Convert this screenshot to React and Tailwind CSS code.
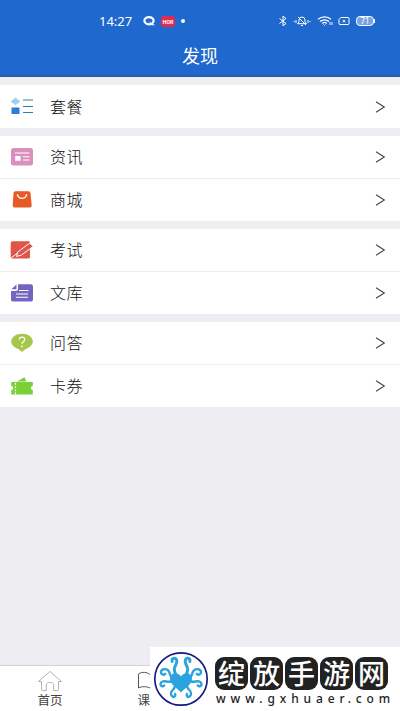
import React from 'react';

const PackageIcon = () => (
  <svg viewBox="0 0 24 20" className="w-6 h-5">
    <path d="M5.5 1.200 9.700 4.400 5.500 7.600 1.300 4.400Z" fill="#9bd0ee" stroke="#9bd0ee" strokeLinejoin="round" />
    <rect x="1.500" y="10.500" width="8" height="6.500" rx=".5" fill="#2f7bd6" />
    <path d="M13 3h10M13 9.500h10M13 15.500h10" stroke="#3a76b5" strokeWidth="1.200" />
  </svg>
);

const NewsIcon = () => (
  <svg viewBox="0 0 24 20" className="w-6 h-5">
    <rect x="1" y="1" width="22" height="17.500" rx="2.500" fill="#db8fbd" />
    <path d="M5 6h14.500M13 9.700h6.500M13 13h6.500" stroke="#fff" strokeWidth="1.100" />
    <rect x="5.200" y="9" width="5.400" height="4.800" fill="#fff" />
  </svg>
);

const ShopIcon = () => (
  <svg viewBox="0 0 24 20" className="w-6 h-5">
    <path d="M5.500 1.200h13a2 2 0 0 1 2 1.700l1.200 12.400a2 2 0 0 1-2 2.200H4.700a2 2 0 0 1-2-2.200L3.500 2.900a2 2 0 0 1 2-1.700Z" fill="#e55a25" />
    <path d="M7.500 5c1.500 4.500 7.500 4.500 9 0" fill="none" stroke="#fff" strokeWidth="1.100" strokeLinecap="round" />
    <circle cx="7.500" cy="5" r=".8" fill="#fff" />
    <circle cx="16.500" cy="5" r=".8" fill="#fff" />
  </svg>
);

const ExamIcon = () => (
  <svg viewBox="0 0 24 20" className="w-6 h-5">
    <path d="M2.500 1.200h16.500a1 1 0 0 1 1 1V17a1.500 1.500 0 0 1-1.500 1.500H1.500L.7 17V3a1.800 1.800 0 0 1 1.800-1.800Z" fill="#e0554a" />
    <path d="M1 18.200 7.500 13" stroke="#fff" strokeWidth="1" />
    <path d="m6.500 16.500 1.300-4.500L19.500 3.200 23.400 6.300 11.500 15Z" fill="#e0554a" stroke="#fff" strokeWidth="1" />
  </svg>
);

const LibraryIcon = () => (
  <svg viewBox="0 0 24 20" className="w-6 h-5">
    <path d="M8 1.200h12.800A2.200 2.200 0 0 1 23 3.400v13a2.200 2.200 0 0 1-2.200 2.200H3.200A2.200 2.200 0 0 1 1 16.400V8h5a2 2 0 0 0 2-2Z" fill="#7466c0" />
    <path d="M1.300 6.300 6.500 1.500v4a.8.8 0 0 1-.8.800Z" fill="#7466c0" />
    <path d="M9 7.500h9.500M6 11h12M6 14.300h12" stroke="#fff" strokeWidth="1.100" />
  </svg>
);

const QuestionIcon = () => (
  <svg viewBox="0 0 24 20" className="w-6 h-5">
    <path d="M12 .8c6 0 10.800 3.400 10.800 7.700 0 3.400-3.300 6.400-7.200 7.400L12 19l-3.600-3.100C4.500 14.900 1.200 11.900 1.200 8.500 1.200 4.200 6 .8 12 .8Z" fill="#a5c74c" />
    <path d="M9.300 6.500c.2-3.400 5.800-3 5.500.1-.2 2-2.800 2-2.800 4.400" fill="none" stroke="#fff" strokeWidth="1.200" />
    <circle cx="12" cy="13.300" r=".9" fill="#fff" />
  </svg>
);

const CouponIcon = () => (
  <svg viewBox="0 0 24 20" className="w-6 h-5">
    <path d="m7 5.500 7.500-4.300L16.300 5.500Z" fill="#7ccb3f" />
    <path d="M1.200 6h21.600v4a2 2 0 0 0 0 4v4.500H1.200V14a2 2 0 0 0 0-4Z" fill="#7ad037" />
    <path d="M5.500 7v11" stroke="#fff" strokeWidth="1.200" strokeDasharray="1.800 1.400" />
  </svg>
);

const groups = [
  [{ label: '套餐', icon: PackageIcon }],
  [
    { label: '资讯', icon: NewsIcon },
    { label: '商城', icon: ShopIcon },
  ],
  [
    { label: '考试', icon: ExamIcon },
    { label: '文库', icon: LibraryIcon },
  ],
  [
    { label: '问答', icon: QuestionIcon },
    { label: '卡券', icon: CouponIcon },
  ],
];

const StatusBar = () => (
  <div className="flex h-[42px] items-center pl-[99px] pr-[25px] text-white">
    <span className="w-[35px] whitespace-nowrap text-[13px] leading-none font-['Noto_Sans']">14:27</span>
    <svg viewBox="0 0 14 12" className="ml-[8px] h-3 w-3.5">
      <ellipse cx="7" cy="5.700" rx="4.600" ry="3.600" fill="none" stroke="#fff" strokeWidth="2.200" />
      <path d="m7.500 6.500 5.500 3.700H9Z" fill="#fff" />
    </svg>
    <span className="ml-[5px] flex h-[11px] w-[14px] items-center justify-center rounded-[3px] bg-[#df2c50] text-[5px] font-bold leading-none">
      HOR
    </span>
    <span className="ml-[6px] h-1 w-1 rounded-full bg-white" />

    <div className="ml-auto flex items-center">
      <svg viewBox="0 0 10 12" className="h-3 w-2.5" fill="none" stroke="#fff" strokeWidth="1">
        <path d="m1.500 3.500 6.500 5L5 10.800V1.200l3 2.300-6.500 5" />
      </svg>
      <svg viewBox="0 0 18 12" className="ml-[5px] h-3 w-[18px]" fill="none" stroke="#fff" strokeWidth="1">
        <path d="M4.500 8.700h9L12 7V5a3 3 0 0 0-6 0v2ZM8 10.500h2M5 2l8 8M3 5v3M1 6v1M15 5v3M17 6v1" />
      </svg>
      <svg viewBox="0 0 16 12" className="ml-[6px] h-3 w-4" fill="none" stroke="#fff" strokeWidth="1.200">
        <path d="M1 4.300c3.500-3.200 9.500-3.200 13 0M3 6.500c2.500-2.300 6.500-2.300 9 0M5.200 8.500c1.300-1.200 3.300-1.200 4.600 0" />
        <path d="m6.500 9.500 1 1 1-1M13 7v3M15 7v3" strokeWidth=".9" />
      </svg>
      <svg viewBox="0 0 12 10" className="ml-[5px] h-2.5 w-3" fill="none" stroke="#fff" strokeWidth="1">
        <path d="M2.800 1.500H10a1 1 0 0 1 1 1v5a1 1 0 0 1-1 1H2a1 1 0 0 1-1-1v-4ZM4.800 4l2.400 2.400M7.200 4 4.800 6.400" />
      </svg>
      <span className="ml-[6px] flex h-[10px] w-[18px] items-center justify-center rounded-[4px] border border-white bg-[#75a4e4] text-[8px] leading-none font-['Noto_Sans']">
        71
      </span>
      <span className="h-[4px] w-px bg-white" />
    </div>
  </div>
);

const MenuRow = ({ item, last, single }) => {
  const Icon = item.icon;
  return (
    <div
      className={`flex items-center bg-white pl-[10px] pr-[14px] ${
        single ? 'h-[43px]' : last ? 'h-[42px]' : 'h-[43px] border-b border-[#ededf0]'
      }`}
    >
      <Icon />
      <span className="ml-[16px] pb-[2px] text-[16px] font-light leading-none tracking-[0.400px] text-[#111]">{item.label}</span>
      <svg viewBox="0 0 12 14" className="ml-auto h-3.5 w-3" fill="none" stroke="#444" strokeWidth="1.100">
        <path d="m2 1.800 8.300 5.200L2 12.200" />
      </svg>
    </div>
  );
};

const Octopus = () => (
  <svg viewBox="0 0 56 56" className="h-14 w-14 shrink-0">
    <circle cx="28" cy="28" r="26.200" fill="#fff" stroke="#171b82" strokeWidth="1.700" />
    <path d="M28 41.500c-3-4-11.500-8-11-14 .3-5.500 7-7.500 11-2 4-5.500 10.700-3.500 11 2 .5 6-8 10-11 14Z" fill="#2ba3df" />
    {[1, -1].map((side) => (
      <g
        key={side}
        transform={side === 1 ? undefined : 'translate(56 0) scale(-1 1)'}
        fill="none"
        stroke="#2ba3df"
        strokeWidth="2.400"
        strokeLinecap="round"
      >
        <path d="M19.200 10.500c-1-3.500 3-4.300 4.300-2 1.500 3.500-2 6.500-2.200 9.500-.1 2.500 1.200 4.500 2.200 7" strokeWidth="2.900" />
        <path d="M12.200 22.800c-2 2-4.500 0-4.200-2 .5-3 4.500-3.200 6.700-1.700 2.800 2 1.500 5.500 4.500 8.200" />
        <path d="M11.200 34.500c-1.500 1.800-4 .3-3.700-1.700.5-2.800 4.200-2.800 6-2.300 2.700.7 4.700.2 6.200-1" />
        <path d="M22.200 43c.8 2.500-1.700 3.700-3.200 2.200-2.200-2.200-.5-5 .7-6.200 1-1 2-2 2.300-4" />
      </g>
    ))}
  </svg>
);

const SiteBadge = () => (
  <div className="absolute bottom-0 right-0 flex h-16 w-[250px] bg-white pl-[3px] pt-[4px]">
    <Octopus />
    <div className="ml-[6px] mt-[6px] w-[178px]">
      <div className="flex gap-[2px]">
        {['绽', '放', '手', '游', '网'].map((char) => (
          <span
            key={char}
            className="flex h-[33px] w-[33px] items-center justify-center rounded-[9px] bg-[#222] pb-[3px] text-[27px] font-medium leading-none text-white"
          >
            {char}
          </span>
        ))}
      </div>
      <div className="mt-[2px] whitespace-nowrap pl-px text-[12px] font-medium leading-[14px] tracking-[4.900px] text-[#222] font-['Noto_Sans']">
        www.gxhuaer.com
      </div>
    </div>
  </div>
);

const TabBar = () => (
  <div className="flex h-[46px] border-t border-[#d2d2d4] bg-white text-[12.500px] text-[#444]">
    <div className="flex w-[100px] flex-col items-center pt-[4px]">
      <svg viewBox="0 0 26 22" className="h-[22px] w-[26px]" fill="none" stroke="#aaa" strokeWidth=".9">
        <path d="M13 1.500 1.500 11.500h3v8.200c0 .5.300.8.800.8h4v-5.500c0-3.500 7.400-3.500 7.400 0v5.500h4c.5 0 .8-.3.800-.8v-8.200h3Z" strokeLinejoin="round" />
      </svg>
      <span className="mt-px leading-[14px]">首页</span>
    </div>
    <div className="flex w-[100px] flex-col items-center pt-[4px]">
      <svg viewBox="0 0 26 22" className="h-[22px] w-[26px]" fill="none" stroke="#555" strokeWidth="1">
        <path d="M13 4.500C10 2 5 1.500 1.500 4v14c3.500-2 8.500-1.500 11.500 0 3-1.500 8-2 11.500 0V4C21 1.500 16 2 13 4.500Z" />
      </svg>
      <span className="mt-px leading-[14px]">课程</span>
    </div>
  </div>
);

const App = () => {
  return (
    <div className="relative flex h-[711px] w-[400px] flex-col overflow-hidden bg-[#eeeef2] font-['Noto_Sans_CJK_SC',sans-serif]">
      <header className="h-[77px] shrink-0 border-b-2 border-[#285fa8] bg-[#1f69ce]">
        <StatusBar />
        <h1 className="text-center text-[18px] leading-[27px] text-white">发现</h1>
      </header>

      <main className="flex flex-1 flex-col gap-[8px] pt-[8px]">
        {groups.map((group) => (
          <section key={group[0].label}>
            {group.map((item, index) => (
              <MenuRow
                key={item.label}
                item={item}
                last={index === group.length - 1}
                single={group.length === 1}
              />
            ))}
          </section>
        ))}
      </main>

      <TabBar />
      <SiteBadge />
    </div>
  );
};

export default App;
